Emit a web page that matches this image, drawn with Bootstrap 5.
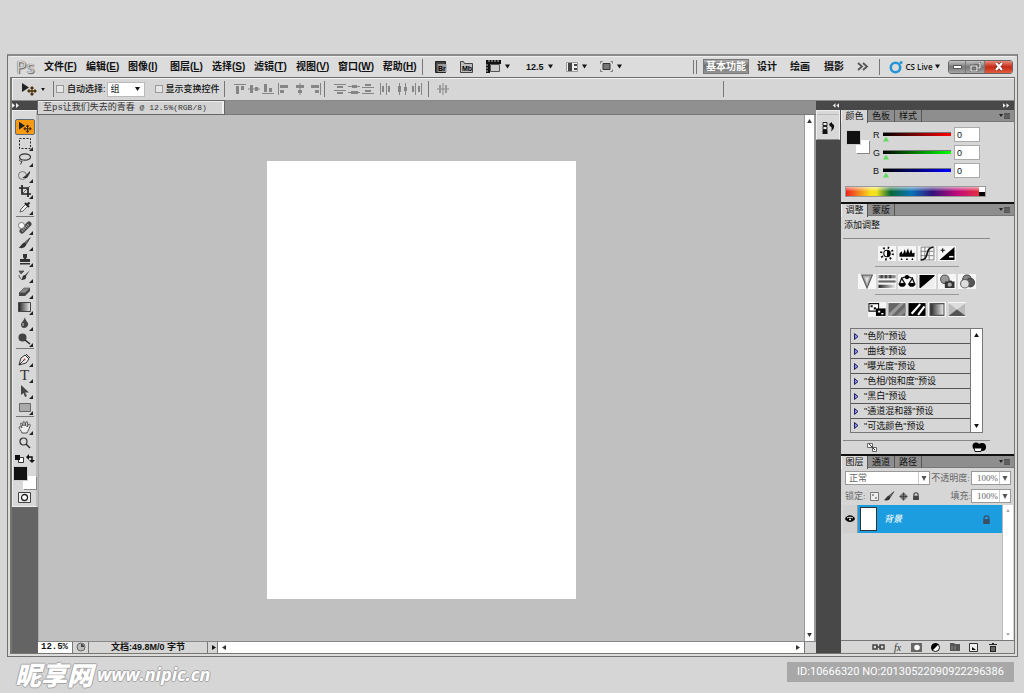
<!DOCTYPE html>
<html lang="zh-CN">
<head>
<meta charset="utf-8">
<meta name="viewport" content="width=device-width, initial-scale=1">
<title>Photoshop</title>
<link href="https://cdn.jsdelivr.net/npm/bootstrap@5.3.0/dist/css/bootstrap.min.css" rel="stylesheet">
<style>
  body{background:#d6d6d6;color:#111;font:10px/14px "Liberation Sans","Noto Sans CJK SC",sans-serif;min-height:100vh}
  button,input,select{font:inherit;color:inherit;padding:0;margin:0;border:0;background:none;border-radius:0}
  button{display:inline-flex;align-items:center;justify-content:center;line-height:1}
  a{color:inherit;text-decoration:none}
  svg{display:block;flex:none}
  .stage{padding:54px 6px 0 7px}
  .frame{border:1px solid #707070;border-top:2px solid #8a8a8a;background:#dcdcdc;padding:0 2px 2px 2px}
  .inner-frame{border:solid #77776f;border-width:0 1px 1px 2px;background:#d6d6d6}
  /* menu bar */
  .menubar{height:21px;padding-left:2px;box-shadow:inset 0 1px #eee}
  .ps-mark{font:17px/20px "Open Sans",sans-serif;color:#d2d2d2;text-shadow:0 0 1px #444,1px 1px 1px #666;width:28px}
  .menus{display:grid;grid-auto-flow:column;grid-auto-columns:42px;font-weight:700;white-space:nowrap}
  .menus u{text-underline-offset:1px}
  .vline{width:1px;height:16px;background:#777;flex:none}
  .launch{margin-left:12px;font-weight:700;font-size:9px}
  .wide{margin-left:13px}
  .spaces{display:grid;grid-template-columns:50px 32px 34px 34px 24px;align-items:center;justify-items:center;font-weight:700}
  .space-on{background:linear-gradient(#b0b0b0,#6d6d6d 45%,#969696);color:#fff;width:46px;height:15px;border:1px solid #777;font-weight:700}
  .spaces button{white-space:nowrap;font-weight:700}
  .grip{width:4px;height:14px;border:solid #777;border-width:0 1px}
  .live{width:51px;margin:0 8px 0 9px;font:600 8px/14px "Open Sans",sans-serif;white-space:nowrap;justify-content:space-between}
  .winbtns{width:65px;height:14px;border:1px solid #666;border-radius:3px;overflow:hidden;margin-right:2px}
  .winbtns button{height:100%;background:linear-gradient(#c4c4c4,#777 50%,#a5a5a5);border-right:1px solid #777}
  .winbtns .quit{background:linear-gradient(#e88a78,#c62b15 50%,#e25b3e);border:0}
  /* options bar */
  .optbar{height:24px;border-top:1px solid #6e6e6e;border-bottom:1px solid #888;box-shadow:inset 1px 1px #f2f2f2;padding-left:9px}
  .optbar label{font-size:9px;white-space:nowrap;font-weight:500}
  .tick{appearance:none;width:8px;height:8px;border:1px solid #999;background:#e6e6e6;flex:none;margin:0 3px 0 2px}
  .pick{appearance:none;background:#fff url("data:image/svg+xml,%3Csvg xmlns='http://www.w3.org/2000/svg' width='5' height='4'%3E%3Cpath d='M0 0h5L2.500 4z' fill='%23111'/%3E%3C/svg%3E") no-repeat right 4px center;border:1px solid #bbb;width:38px;height:15px;padding-left:3px;line-height:13px;font-size:9px;margin:0 8px 0 1px}
  .aligns{display:grid;color:#858585;align-items:center;justify-items:center}
  .al-a{grid-template-columns:14px 14px 14px 16px 18px 15px;width:91px}
  .al-b{grid-template-columns:14px 14px 14px 20px 15px 14px;width:91px}
  /* toolbox */
  .tools{width:26px;background:#646464;flex:none}
  .darkcap{height:9px;background:#484848;color:#eee;flex:none}
  .toolbox{background:#d8d8d8;border:1px solid #eee;border-right:2px solid #bbb;height:397px;padding-top:8px;color:#333}
  .toolbox button{width:20px;height:16px;position:relative}
  .toolbox .more::after{content:"";position:absolute;right:2px;bottom:0;border:solid transparent;border-width:2px;border-right-color:#222;border-bottom-color:#222}
  .toolbox .current{background:#f79b12;border:1px solid #5d6b77;border-radius:2px}
  .rule{width:18px;height:1px;background:#777;margin:1px 0 2px}
  .fgbg{width:22px;height:22px;position:relative}
  .fgbg i{position:absolute;width:13px;height:13px;background:#fff;box-shadow:1px 1px #888;right:0;bottom:0}
  .fgbg i:first-child{background:#111;left:0;top:0;right:auto;bottom:auto;z-index:1;box-shadow:0 0 0 1px #ccc}
  /* document */
  .tabstrip{height:14px;background:#909090;border-bottom:1px solid #777}
  .doc-tab{background:#d3d3d3;border:solid #eee;border-width:1px 2px 0 0;outline:1px solid #666;padding:0 5px;font:9px/12px "Liberation Mono","Noto Sans CJK SC",monospace;color:#333;height:13px;width:186px;white-space:nowrap;overflow:hidden}
  .doc-info{font-size:8px}
  .pasteboard{background:#c0c0c0;border-left:1px solid #a8a8a8;padding:3px 0 0}
  .page{background:#fff;width:309px;height:438px}
  .vscroll{width:12px;background:#fff;border:solid #999;border-width:0 2px 0 1px;flex:none}
  .vscroll,.hscroll{color:#333}
  .status{height:12px;border-top:1px solid #888;font:9px/11px "Liberation Sans","Noto Sans CJK SC",sans-serif;font-weight:700}
  .zoomin{width:34px;background:#fff;padding-left:3px;font-family:"Liberation Mono",monospace;font-size:9px;font-weight:700;height:11px}
  .cell{border-left:1px solid #777;height:11px}
  .hscroll{background:#fff;height:11px}
  /* dock */
  .dock{width:198px;flex:none}
  .strip{width:25px;background:#484848;flex:none}
  .strip button{width:24px;height:30px;background:#d8d8d8;border:1px solid #eee;border-bottom-color:#888;padding-top:5px;box-shadow:inset 0 3px #d8d8d8,inset 0 4px #bbb}
  .tabrow{height:12px;background:#8e8e8e;font-size:9px;line-height:12px;border-bottom:1px solid #777}
  .tabrow button{width:27px;height:12px;border-right:1px solid #555;white-space:nowrap}
  .tabrow .on{background:#d6d6d6;height:13px;border-left:1px solid #eee}
  .panel-bg{background:#d6d6d6}
  .edge{border-bottom:2px solid #111}
  .color-body{padding:5px 0 0 6px}
  .rgb{display:grid;grid-template-columns:10px 68px 25px;column-gap:0;row-gap:3px;font-size:9px;align-items:center}
  .rgb input[type=text]{width:26px;height:15px;background:#fff;border:1px solid #aaa;padding-left:2px;margin-left:3px;font-size:9px;line-height:12px}
  .rgb input[type=range]{appearance:none;width:68px;height:10px;margin-top:4px;background:linear-gradient(#777,#777) 0 0/100% 1px no-repeat,linear-gradient(90deg,#000,var(--ink)) 0 0/100% 4px no-repeat}
  .rgb input[type=range]::-webkit-slider-thumb{appearance:none;width:6px;height:5px;margin-top:5px;background:#5fdc5f;clip-path:polygon(50% 0,100% 100%,0 100%)}
  .spectrum{width:141px;height:11px;border:1px solid #999;background:linear-gradient(#fff9,#fff0 50%),linear-gradient(90deg,#e22,#f7e11b 18%,#f0e020 22%,#0a6a35 32%,#0a72b8 47%,#33127c 62%,#c00878 80%,#e8343c 97%)}
  .spectrum i{width:6px;background:linear-gradient(#fff 50%,#000 50%)}
  .adj{width:147px;margin-left:2px}
  .adj-title{padding:2px 0 6px 1px;font-size:9px}
  .hr-full{height:1px;background:#888;width:147px}
  .hr-part{height:1px;background:#999;width:84px;margin:5px auto 6px}
  .ic{width:20px;height:16px}
  .ic svg{background:#f6f6f6;width:18px;height:15px}
  .presets{width:133px;border:1px solid #777;margin:11px 0 7px 9px;height:105px}
  .presets li{height:15px;line-height:14px;border-bottom:1px solid #555;font-size:9px}
  .presets li:last-child{border:0;height:13px}
  .presets ul{border-right:1px solid #777}
  .serif{font-family:"Liberation Serif","Noto Sans CJK SC",serif;font-size:9px;color:#666;white-space:nowrap}
  .blend{appearance:none;background:#fff url("data:image/svg+xml,%3Csvg xmlns='http://www.w3.org/2000/svg' width='11' height='12'%3E%3Cpath d='M0 0v12' stroke='%23999'/%3E%3Cpath d='M3.500 4h5L6 9z' fill='%23555'/%3E%3C/svg%3E") no-repeat right center;border:1px solid #999;height:14px;padding-left:3px;line-height:12px}
  .pct{width:40px;padding-left:5px}
  .mode{width:85px}
  .layer-row{height:28px;background:#1c9de0;color:#fff}
  .eye{width:15px;background:#d0d0d0;border-right:1px solid #999}
  .thumb{width:17px;height:24px;background:#fff;border:1px solid #333;margin-left:2px}
  .layer-name{margin-left:7px;font-size:9px}
  .lscroll{width:11px;background:#fff;border-left:1px solid #bbb;color:#aaa}
  .foot-icons{height:13px;border-top:1px solid #777;display:grid;grid-template-columns:repeat(7,19px);justify-content:end;justify-items:center;align-items:center;padding-right:12px;color:#333}
  .foot-icons button{width:14px;height:11px}
  /* page footer */
  .site-foot{height:36px;padding:0 10px 2px 15px}
  .site-name,.site-url{color:#fff;text-shadow:1px 0 #a5a5a5,-1px 0 #a5a5a5,0 1px #a5a5a5,0 -1px #a5a5a5}
  .site-name{font:italic 900 26px/30px "Noto Sans CJK SC",sans-serif}
  .site-url{font:italic 700 18px/30px "Open Sans",sans-serif}
  .stamp{background:#a8a8a8;color:#fff;font:11px/20px Roboto,sans-serif;height:20px;width:227px;text-align:center;white-space:nowrap}
</style>
</head>
<body class="d-flex flex-column">
<svg width="0" height="0" class="position-absolute" aria-hidden="true">
  <symbol id="dn" viewBox="0 0 6 5"><path d="M0 0h6L3 5z" fill="currentColor"/></symbol>
  <symbol id="up" viewBox="0 0 6 5"><path d="M0 5h6L3 0z" fill="currentColor"/></symbol>
  <symbol id="rt" viewBox="0 0 5 6"><path d="M0 0v6l5-3z" fill="currentColor"/></symbol>
  <symbol id="lt" viewBox="0 0 5 6"><path d="M5 0v6L0 3z" fill="currentColor"/></symbol>
  <symbol id="dbl" viewBox="0 0 8 5"><path d="M0 0v5l3-2.500zM4 0v5l3-2.500z" fill="currentColor"/></symbol>
  <symbol id="fly" viewBox="0 0 11 6"><path d="M0 1h4L2 4z" fill="#222"/><path d="M5 0h6v6H5z" fill="#555"/><path d="M5 2h6M5 4h6" stroke="#777" stroke-width=".6"/></symbol>
  <symbol id="brush" viewBox="0 0 16 16"><path d="M15 1L8 7l2 2z" fill="#777" stroke="#333"/><path d="M8 7c-3 0-3 3-7 6 4 2 9 0 9-4z" fill="#333"/></symbol>
  <symbol id="lock" viewBox="0 0 10 11"><path d="M2 5V4a3 3 0 016 0v1" fill="none" stroke="currentColor" stroke-width="1.500"/><path d="M1 5h8v6H1z" fill="currentColor"/></symbol>
  <symbol id="move" viewBox="0 0 16 14"><path d="M1 1v9l7-4.500z" fill="#222"/><path d="M11 5v8M7 9h8M9.500 6.500L11 5l1.500 1.500M9.500 11.500L11 13l1.500-1.500M8.500 7.500L7 9l1.500 1.500M13.500 7.500L15 9l-1.500 1.500" stroke="#4a2d08" stroke-width="1.300" fill="none"/></symbol>
  <symbol id="alT" viewBox="0 0 12 12"><path d="M0 1.500h12" stroke="currentColor"/><path d="M2 3h3v8H2zM7 3h3v4H7z" fill="currentColor"/></symbol>
  <symbol id="alM" viewBox="0 0 12 12"><path d="M0 6h12" stroke="currentColor"/><path d="M2 2h3v8H2zM7 4h3v4H7z" fill="currentColor"/></symbol>
  <symbol id="dis" viewBox="0 0 12 12"><path d="M0 1.500h12M0 7.500h12" stroke="currentColor"/><path d="M3 3h6v2H3zM3 9h6v2H3z" fill="currentColor"/></symbol>
</svg>

<div class="stage flex-grow-1 d-flex flex-column">
 <div class="frame flex-grow-1 d-flex flex-column">
  <header class="menubar d-flex align-items-center">
    <span class="ps-mark ms-1">Ps</span>
    <nav class="menus">
      <a href="#">文件(<u>F</u>)</a><a href="#">编辑(<u>E</u>)</a><a href="#">图像(<u>I</u>)</a><a href="#">图层(<u>L</u>)</a><a href="#">选择(<u>S</u>)</a><a href="#">滤镜(<u>T</u>)</a><a href="#">视图(<u>V</u>)</a><a href="#">窗口(<u>W</u>)</a><a href="#">&nbsp;帮助(<u>H</u>)</a>
    </nav>
    <span class="vline"></span>
    <div class="launch d-flex align-items-center">
      <button aria-label="Bridge"><svg width="12" height="12" viewBox="0 0 12 12"><path d="M.500.500h10v11H.500z" fill="#444" stroke="#222"/><path d="M2.500 3h9v8h-9z" fill="#999"/><text x="3" y="9.500" font-size="7" font-weight="700">Br</text></svg></button>
      <button class="wide" aria-label="Mini Bridge"><svg width="13" height="12" viewBox="0 0 13 12"><path d="M.500 11.500V.500h3l1 2h8v9z" fill="#bbb" stroke="#444"/><text x="2" y="9.500" font-size="7" font-weight="700">Mb</text></svg></button>
      <button class="wide" aria-label="标尺"><svg width="15" height="13" viewBox="0 0 15 13"><path d="M0 0h15v4H4v9H0z" fill="#111"/><path d="M4.500 4.500h9v7h-9z" fill="#ccc" stroke="#555"/><path d="M3 0v2M6 0v2M9 0v2M12 0v2M0 5h2M0 8h2M0 11h2" stroke="#bbb"/></svg></button>
      <svg width="5" height="5" class="ms-1"><use href="#dn"/></svg><span class="ms-3">12.5</span>
      <svg width="5" height="5" class="ms-1"><use href="#dn"/></svg>
      <button class="wide" aria-label="排列文档"><svg width="12" height="10" viewBox="0 0 12 10"><path d="M.500.500h11v9H.500z" fill="#eee" stroke="#999"/><path d="M2 1h4v8H2zM8 2h3v2H8zM8 6h3v2H8z" fill="#444"/></svg></button>
      <svg width="5" height="5" class="ms-1"><use href="#dn"/></svg>
      <button class="wide" aria-label="屏幕模式"><svg width="13" height="11" viewBox="0 0 13 11"><path d="M3 2.500h7v6H3z" fill="#777" stroke="#333"/><path d="M.500 2.500v-2h2M10.500.500h2v2M.500 8.500v2h2M10.500 10.500h2v-2" fill="none" stroke="#777"/></svg></button>
      <svg width="5" height="5" class="ms-1"><use href="#dn"/></svg>
    </div>
    <div class="ms-auto d-flex align-items-center">
      <span class="grip"></span>
      <div class="spaces ms-1"><button class="space-on">基本功能</button><button>设计</button><button>绘画</button><button>摄影</button>
        <button aria-label="更多"><svg width="12" height="9" viewBox="0 0 12 9"><path d="M1 1l4 3.500L1 8M6 1l4 3.500L6 8" fill="none" stroke="#555" stroke-width="1.800"/></svg></button></div>
      <span class="vline ms-1"></span>
      <button class="live"><svg width="14" height="14" viewBox="0 0 14 14"><circle cx="6.500" cy="7.500" r="4.700" fill="none" stroke="#2595d6" stroke-width="2.600"/><circle cx="12" cy="2.500" r="1.500" fill="#2595d6"/></svg>CS Live<svg width="5" height="5"><use href="#dn"/></svg></button>
      <div class="winbtns d-flex">
        <button style="flex:17" aria-label="最小化"><svg width="9" height="4"><path d="M.500.500h8v3h-8z" fill="#fff" stroke="#555"/></svg></button>
        <button style="flex:19" aria-label="还原"><svg width="11" height="10" viewBox="0 0 11 10"><path d="M4 1h6v5H8M1 4h6v5H1z" fill="none" stroke="#444" stroke-width="2.400"/><path d="M4 1h6v5H8M1 4h6v5H1z" fill="none" stroke="#fff" stroke-width="1.200"/></svg></button>
        <button style="flex:28" class="quit" aria-label="关闭"><svg width="10" height="9" viewBox="0 0 10 9"><path d="M2 1l6 7M8 1L2 8" stroke="#622" stroke-width="3.400"/><path d="M2 1l6 7M8 1L2 8" stroke="#fff" stroke-width="2.200"/></svg></button>
      </div>
    </div>
  </header>

  <div class="inner-frame flex-grow-1 d-flex flex-column">
   <div class="optbar d-flex align-items-center">
    <svg width="16" height="14" aria-hidden="true"><use href="#move"/></svg>
    <svg width="4" height="3" class="ms-1"><use href="#dn"/></svg>
    <span class="vline ms-2"></span>
    <input type="checkbox" class="tick" id="auto"><label for="auto">自动选择:</label>
    <select class="pick" aria-label="自动选择"><option>组</option></select>
    <input type="checkbox" class="tick" id="ctl"><label for="ctl">显示变换控件</label>
    <span class="vline ms-1 me-2"></span>
    <div class="aligns al-a">
      <svg width="12" height="12"><use href="#alT"/></svg><svg width="12" height="12"><use href="#alM"/></svg><svg width="12" height="12"><use href="#alT" transform="matrix(1 0 0 -1 0 12)"/></svg>
      <svg width="12" height="12"><use href="#alT" transform="matrix(0 1 1 0 0 0)"/></svg><svg width="12" height="12"><use href="#alM" transform="matrix(0 1 1 0 0 0)"/></svg><svg width="12" height="12"><use href="#alT" transform="matrix(0 1 -1 0 12 0)"/></svg>
    </div>
    <span class="vline me-2"></span>
    <div class="aligns al-b">
      <svg width="12" height="12"><use href="#dis"/></svg><svg width="12" height="12"><path d="M0 3.500h12M0 9.500h12" stroke="currentColor"/><path d="M4 2h5v3H4zM3 8h7v3H3z" fill="currentColor"/></svg><svg width="12" height="12"><use href="#dis" transform="matrix(1 0 0 -1 0 12)"/></svg>
      <svg width="12" height="12"><use href="#dis" transform="matrix(0 1 1 0 0 0)"/></svg><svg width="12" height="12"><path d="M3.500 0v12M9.500 0v12" stroke="currentColor"/><path d="M2 3h3v6H2zM8 4h3v4H8z" fill="currentColor"/></svg><svg width="12" height="12"><use href="#dis" transform="matrix(0 1 -1 0 12 0)"/></svg>
    </div>
    <span class="vline ms-1 me-2"></span>
    <svg width="12" height="12" viewBox="0 0 12 12"><path d="M6 0v12M0 6h12" stroke="#888"/><path d="M2 2h2v8H2zM8 2h2v8H8z" fill="#999"/></svg>
    <span class="vline ms-auto" style="margin-right:290px"></span>
   </div>

   <div class="flex-grow-1 d-flex">
    <aside class="tools">
      <div class="darkcap d-flex align-items-center"><svg width="8" height="5"><use href="#dbl"/></svg></div>
      <div class="toolbox d-flex flex-column align-items-center">
        <button class="current" aria-label="移动"><svg width="14" height="12"><use href="#move"/></svg></button>
        <button class="more" aria-label="选框"><svg width="12" height="11"><path d="M.500.500h11v10H.500z" fill="none" stroke="#222" stroke-dasharray="2 1.500"/></svg></button>
        <button class="more" aria-label="套索"><svg width="13" height="12" viewBox="0 0 13 12"><ellipse cx="7" cy="4" rx="5.500" ry="3.200" fill="none" stroke="#333" stroke-width="1.200"/><path d="M3 6c-3 1-1 3 1 2 0 1-1 3-2 3.500" fill="none" stroke="#333"/></svg></button>
        <button class="more" aria-label="快速选择"><svg width="13" height="12" viewBox="0 0 13 12"><circle cx="4.500" cy="6.500" r="4" fill="none" stroke="#777"/><path d="M12 2L7 7l-3 2 5 0 3-5z" fill="#333"/></svg></button>
        <button class="more" aria-label="裁剪"><svg width="12" height="12" viewBox="0 0 12 12"><path d="M3 0v9h9M0 3h9v9" fill="none" stroke="#222" stroke-width="1.700"/><path d="M11 1L4 8" stroke="#333" stroke-width=".7"/></svg></button>
        <button class="more" aria-label="吸管"><svg width="12" height="12" viewBox="0 0 12 12"><path d="M1 11l1-3 5-5 2 2-5 5z" fill="#eee" stroke="#444" stroke-width=".8"/><path d="M6 2l4 4M8 4l2.500-2.500" stroke="#222" stroke-width="2"/></svg></button>
        <div class="rule"></div>
        <button class="more" aria-label="修复画笔"><svg width="14" height="13" viewBox="0 0 14 13"><path d="M4 10l7-7" stroke="#444" stroke-width="5" stroke-linecap="round"/><path d="M4 10l7-7" stroke="#aaa" stroke-width="2.500" stroke-dasharray="1 1"/><circle cx="3.500" cy="4.500" r="3" fill="#fff" stroke="#777"/></svg></button>
        <button class="more" aria-label="画笔"><svg width="13" height="13"><use href="#brush"/></svg></button>
        <button class="more" aria-label="图章"><svg width="12" height="12" viewBox="0 0 12 12"><path d="M4 1h4v3L7 6h4v3H1V6h4L4 4zM1 10h10v1.500H1z" fill="#333"/></svg></button>
        <button class="more" aria-label="历史画笔"><svg width="13" height="12" viewBox="0 0 13 12"><path d="M12 1L7 6C4 6 5 9 3 11c3 0 6-1 5-4z" fill="#333"/><path d="M1 2h5L3 5zM1 6c0 2 1 3 2 4" fill="#555" stroke="#444" stroke-width=".7"/></svg></button>
        <button class="more" aria-label="橡皮擦"><svg width="13" height="11" viewBox="0 0 13 11"><path d="M1 7l5-5h6L7 7z" fill="#888" stroke="#444" stroke-width=".6"/><path d="M1 7h6v3H1zM7 7l5-5v3l-5 5z" fill="#444"/></svg></button>
        <button class="more" aria-label="渐变"><svg width="13" height="10"><defs><linearGradient id="gr"><stop stop-color="#222"/><stop offset="1" stop-color="#eee"/></linearGradient></defs><path d="M.500.500h12v9H.500z" fill="url(#gr)" stroke="#444"/></svg></button>
        <button class="more" aria-label="模糊"><svg width="9" height="12" viewBox="0 0 9 12"><path d="M5 0c0 4 4 5 3 8-1 4-7 4-7 0 0-3 3-4 4-8z" fill="#444"/><path d="M3 6v3" stroke="#ccc"/></svg></button>
        <button class="more" aria-label="减淡"><svg width="13" height="12" viewBox="0 0 13 12"><circle cx="4.500" cy="4.500" r="4" fill="#444"/><path d="M7 7l5 4" stroke="#222" stroke-width="1.500"/></svg></button>
        <div class="rule"></div>
        <button class="more" aria-label="钢笔"><svg width="13" height="13" viewBox="0 0 13 13"><path d="M1 12l2-7 4-3 4 4-3 4zM8 1l4 4M1 12l5-5" fill="#eee" stroke="#333"/><circle cx="6.500" cy="6.500" r="1" fill="#a44"/></svg></button>
        <button class="more" aria-label="文字" style="font:15px/16px 'Liberation Serif',serif">T</button>
        <button class="more" aria-label="路径选择"><svg width="9" height="12" viewBox="0 0 9 12"><path d="M1 0v10l2.500-2 1.500 4 2-1-2-3.500h4z" fill="#444"/></svg></button>
        <button class="more" aria-label="矩形"><svg width="12" height="9"><path d="M.500.500h11v8H.500z" fill="#aaa" stroke="#666"/></svg></button>
        <div class="rule"></div>
        <button class="more" aria-label="抓手"><svg width="14" height="13" viewBox="0 0 14 13"><path d="M4 12C3 9 1 8 1 6c1-1 2 0 3 1L2.500 2.500c1-1 1.500 0 2 1L5 5V1c1-1 2 0 2 1v3l1-4c1-1 2 0 1.500 1L9 6l2-3c1 0 1.500 1 1 2-1 3-2 5-3 7z" fill="#eee" stroke="#444" stroke-width=".9"/></svg></button>
        <button aria-label="缩放"><svg width="12" height="12" viewBox="0 0 12 12"><circle cx="4.500" cy="4.500" r="3.500" fill="none" stroke="#333" stroke-width="1.200"/><path d="M7 7l4 4" stroke="#333" stroke-width="1.600"/></svg></button>
        <button aria-label="默认颜色"><svg width="20" height="10" viewBox="0 0 20 10"><path d="M3.500 3.500h5v5h-5z" fill="#fff" stroke="#333"/><path d="M0 1h5v5H0z" fill="#111"/><path d="M13 3h4v4" fill="none" stroke="#111" stroke-width="1.500"/><path d="M11 3l3-3v6zM14 6h6l-3 3z" fill="#111"/></svg></button>
        <div class="fgbg"><i></i><i></i></div>
        <button aria-label="快速蒙版"><svg width="13" height="11"><path d="M.500.500h12v10H.500z" fill="#eee" stroke="#444"/><circle cx="6.500" cy="5.500" r="3" fill="#fff" stroke="#222" stroke-width="1.300"/></svg></button>
      </div>
    </aside>

    <main class="flex-grow-1 d-flex flex-column">
      <div class="tabstrip"><div class="doc-tab">至ps让我们失去的青春<span class="doc-info"> @ 12.5%(RGB/8)</span></div></div>
      <div class="flex-grow-1 d-flex">
        <div class="pasteboard flex-grow-1 d-flex align-items-center justify-content-center"><div class="page"></div></div>
        <div class="vscroll d-flex flex-column justify-content-between align-items-center py-1"><svg width="5" height="4"><use href="#up"/></svg><svg width="5" height="4"><use href="#dn"/></svg></div>
      </div>
      <div class="status d-flex">
        <input class="zoomin" value="12.5%" aria-label="缩放比例">
        <div class="cell d-flex justify-content-center" style="width:16px"><svg width="10" height="10"><circle cx="5" cy="5" r="4" fill="#bbb" stroke="#666"/><path d="M5 5V2a3 3 0 013 3z" fill="#444"/></svg></div>
        <div class="cell text-center" style="width:119px">文档:49.8M/0 字节</div>
        <div class="cell d-flex align-items-center ps-1" style="width:10px"><svg width="4" height="7"><use href="#rt"/></svg></div>
        <div class="hscroll cell flex-grow-1 d-flex align-items-center justify-content-between px-1"><svg width="4" height="5"><use href="#lt"/></svg><svg width="4" height="5"><use href="#rt"/></svg></div>
        <div class="cell" style="width:12px"></div>
      </div>
    </main>

    <aside class="dock d-flex flex-column">
      <div class="darkcap d-flex align-items-center justify-content-between pe-1" style="padding-left:16px"><svg width="7" height="5"><use href="#dbl" transform="matrix(-1 0 0 1 7 0)"/></svg><svg width="7" height="5"><use href="#dbl"/></svg></div>
      <div class="d-flex flex-grow-1">
        <div class="strip"><button aria-label="历史记录"><svg width="13" height="14" viewBox="0 0 13 14"><path d="M1 1.500h4v3H1zM1 5.500h4v3H1z" fill="#eee" stroke="#222"/><path d="M.500 9h5v4h-5z" fill="#111"/><path d="M7 3l3-2v1.500c3 1 3 5-1 8 1-3 1-5-1-5z" fill="#111"/></svg></button></div>
        <div class="flex-grow-1 d-flex flex-column panel-bg">
          <section class="edge" style="height:94px">
            <div class="tabrow d-flex"><button class="on">颜色</button><button>色板</button><button>样式</button><svg width="11" height="6" class="ms-auto me-1 my-auto"><use href="#fly"/></svg></div>
            <div class="color-body d-flex">
              <div class="fgbg mt-1 me-1"><i></i><i></i></div>
              <div class="rgb">
                <label for="r">R</label><input type="range" value="0" max="255" style="--ink:#f00" aria-label="R"><input type="text" id="r" value="0">
                <label for="g">G</label><input type="range" value="0" max="255" style="--ink:#0f0" aria-label="G"><input type="text" id="g" value="0">
                <label for="b">B</label><input type="range" value="0" max="255" style="--ink:#00f" aria-label="B"><input type="text" id="b" value="0">
              </div>
            </div>
            <div class="spectrum d-flex justify-content-end ms-1 mt-2"><i></i></div>
          </section>
          <section class="edge" style="height:252px">
            <div class="tabrow d-flex"><button class="on">调整</button><button>蒙版</button><svg width="11" height="6" class="ms-auto me-1 my-auto"><use href="#fly"/></svg></div>
            <div class="adj">
              <div class="adj-title">添加调整</div>
              <div class="hr-full"></div>
              <div class="d-flex justify-content-center" style="padding-top:6px">
                <button class="ic" aria-label="亮度/对比度"><svg viewBox="0 0 16 14"><circle cx="8" cy="7" r="3" fill="#fff" stroke="#111"/><path d="M8 4a3 3 0 010 6z"/><circle cx="8" cy="7" r="5.500" fill="none" stroke="#111" stroke-width="2" stroke-dasharray="1.500 2.820"/></svg></button>
                <button class="ic" aria-label="色阶"><svg viewBox="0 0 16 14"><path d="M1 10V7l2-2 1 3 2-5 1 4 2-5 1 5 2-4 1 4 2-1v4zM2 13l1-2 1 2zM7 13l1-2 1 2zM12 13l1-2 1 2z"/></svg></button>
                <button class="ic" aria-label="曲线"><svg viewBox="0 0 16 14"><path d="M2.500 1v12h12V1zM6 1v12M10 1v12M2 5h12M2 9h12" fill="none" stroke="#777" stroke-width=".8"/><path d="M2 13c9 0 3-11 12-12" fill="none" stroke="#111" stroke-width="1.500"/></svg></button>
                <button class="ic" aria-label="曝光度"><svg viewBox="0 0 16 14"><path d="M15 1v12H1z"/><path d="M2 4h4M4 2v4" stroke="#111"/><path d="M10 10h4" stroke="#fff" stroke-width="1.500"/></svg></button>
              </div>
              <div class="hr-part"></div>
              <div class="d-flex justify-content-center">
                <button class="ic" aria-label="自然饱和度"><svg viewBox="0 0 16 14"><path d="M3 1h10L8 13z" fill="#aaa" stroke="#555"/><path d="M6 3h4L8 9z" fill="#ddd"/></svg></button>
                <button class="ic" aria-label="色相/饱和度"><svg viewBox="0 0 16 14"><path d="M0 1h16v3H0z" fill="#888"/><path d="M3 1v3M7 1v3M11 1v3" stroke="#444" stroke-width="2"/><path d="M0 6h16v2H0z" fill="#666"/><path d="M0 10h16v3H0z" fill="url(#gr)"/></svg></button>
                <button class="ic" aria-label="色彩平衡"><svg viewBox="0 0 16 14"><path d="M8 1v3M3 4c4-2 6-2 10 0M3 4L1 9h5zM13 4l-3 5h5z" fill="none" stroke="#111" stroke-width="1.200"/><path d="M0 9h7c-1 4-6 4-7 0zM9 9h7c-1 4-6 4-7 0z"/><circle cx="8" cy="3" r="2"/></svg></button>
                <button class="ic" aria-label="黑白"><svg viewBox="0 0 16 14"><path d="M1 1h14v1L2 13H1z"/><path d="M15 2v11H3z" fill="#eee"/></svg></button>
                <button class="ic" aria-label="照片滤镜"><svg viewBox="0 0 16 14"><circle cx="6" cy="5" r="4" fill="#999" stroke="#555"/><path d="M6 7h3l1-1h2l1 1h2v6H6z" fill="#333"/><circle cx="10.500" cy="10" r="2" fill="#aaa"/></svg></button>
                <button class="ic" aria-label="通道混和器"><svg viewBox="0 0 16 14"><circle cx="8" cy="5" r="4" fill="#888" stroke="#444"/><circle cx="11" cy="8" r="4" fill="#555" stroke="#444"/><circle cx="6" cy="9" r="4" fill="#ddd" stroke="#666"/></svg></button>
              </div>
              <div class="hr-part"></div>
              <div class="d-flex justify-content-center">
                <button class="ic" aria-label="反相"><svg viewBox="0 0 16 14"><path d="M.500 1.500h9v7h-9z" fill="#fff" stroke="#111"/><path d="M7 6h9v7H7z"/><path d="M2 4h2M5 6h2" stroke="#111" stroke-width="2"/><path d="M9 9h2M12 11h2" stroke="#fff" stroke-width="1.500"/></svg></button>
                <button class="ic" aria-label="色调分离"><svg viewBox="0 0 16 14"><path d="M0 1h16v12H0z" fill="#666"/><path d="M0 11L11 1h4L3 13H0z" fill="#999"/><path d="M7 13l9-9v5l-4 4z" fill="#888"/></svg></button>
                <button class="ic" aria-label="阈值"><svg viewBox="0 0 16 14"><path d="M0 1h16v12H0z"/><path d="M3 11l8-9M9 12l6-8" stroke="#fff" stroke-width="2"/></svg></button>
                <button class="ic" aria-label="渐变映射"><svg viewBox="0 0 16 14"><path d="M1.500 1.500h13v11h-13z" fill="url(#gr)" stroke="#555"/></svg></button>
                <button class="ic" aria-label="可选颜色"><svg viewBox="0 0 16 14"><path d="M0 1h16v12H0z" fill="#bbb"/><path d="M0 1h16L8 7z" fill="#ddd"/><path d="M0 13l8-6 8 6z" fill="#555"/></svg></button>
              </div>
            </div>
            <div class="presets d-flex">
              <ul class="list-unstyled mb-0 flex-grow-1" id="presetList"></ul>
              <div class="d-flex flex-column justify-content-between align-items-center bg-white py-1" style="width:11px"><svg width="5" height="4"><use href="#up"/></svg><svg width="5" height="4"><use href="#dn"/></svg></div>
            </div>
            <div class="adj"><div class="hr-full"></div>
              <div class="d-flex justify-content-between" style="padding:1px 3px 0 23px"><svg width="12" height="10"><path d="M1.500 1.500h5v4h-5zM6.500 5.500h4v4h-4z" fill="#fff" stroke="#666"/><path d="M3 2l6 6" stroke="#333"/></svg><svg width="15" height="10"><circle cx="4" cy="4" r="3.500"/><circle cx="10" cy="5" r="4"/><path d="M2 6h8l-1 3.500H3z" fill="#fff" stroke="#111"/></svg></div></div>
          </section>
          <section class="flex-grow-1 d-flex flex-column">
            <div class="tabrow d-flex"><button class="on">图层</button><button>通道</button><button>路径</button><svg width="11" height="6" class="ms-auto me-1 my-auto"><use href="#fly"/></svg></div>
            <div class="d-flex align-items-center justify-content-between serif ps-1" style="padding-right:3px;height:16px;margin-top:2px"><select class="blend mode" aria-label="混合模式"><option>正常</option></select><label for="op">不透明度:</label><select id="op" class="blend pct"><option>100%</option></select></div>
            <div class="d-flex align-items-center serif ps-1" style="padding-right:3px;height:16px;margin-top:2px"><span class="me-1">锁定:</span>
              <svg width="9" height="9"><path d="M.500.500h8v8h-8z" fill="#eee" stroke="#777"/><path d="M2 2h2v2H2zM5 5h2v2H5z" fill="#999"/></svg>
              <svg width="12" height="11" class="ms-1"><use href="#brush"/></svg>
              <svg width="9" height="9" class="ms-1"><path d="M4.500 0L9 4.500 4.500 9 0 4.500z" fill="#777"/><path d="M4.500 1v7M1 4.500h7" stroke="#444"/></svg>
              <svg width="8" height="8" class="ms-1" color="#444"><use href="#lock"/></svg>
              <label for="fill" class="ms-auto">填充:</label><select id="fill" class="blend pct"><option>100%</option></select></div>
            <div class="d-flex flex-grow-1" style="padding:1px 1px 0 2px">
              <div class="flex-grow-1">
                <div class="layer-row d-flex align-items-center">
                  <div class="eye h-100 d-flex align-items-center justify-content-center"><svg width="10" height="8" viewBox="0 0 10 8"><path d="M0 4c2-5 8-5 10 0-2 4-8 4-10 0z"/><path d="M2 3c2-1 4-1 6 0" stroke="#fff" fill="none"/><circle cx="5" cy="4.500" r="1" fill="#fff"/></svg></div>
                  <div class="thumb"></div>
                  <em class="layer-name">背景</em>
                  <svg width="9" height="9" class="ms-auto" style="margin-right:11px" color="#3c4e66"><use href="#lock"/></svg>
                </div>
              </div>
              <div class="lscroll d-flex flex-column justify-content-between align-items-center py-1"><svg width="4" height="3"><use href="#up"/></svg><svg width="4" height="3"><use href="#dn"/></svg></div>
            </div>
            <div class="foot-icons">
              <button aria-label="链接"><svg width="13" height="6"><path d="M1 1h4v4H1zM8 1h4v4H8zM4 3h5" fill="none" stroke="#444" stroke-width="1.500"/></svg></button>
              <button aria-label="样式" style="font:italic 10px 'Liberation Serif',serif">fx</button>
              <button aria-label="蒙版"><svg width="11" height="9"><path d="M0 0h11v9H0z" fill="#666"/><circle cx="6" cy="4.500" r="2.800" fill="#fff"/></svg></button>
              <button aria-label="调整图层"><svg width="9" height="9"><circle cx="4.500" cy="4.500" r="4" fill="#fff" stroke="#111"/><path d="M1.500 7.500a4 4 0 016-6z"/></svg></button>
              <button aria-label="组"><svg width="10" height="8"><path d="M0 0h4l1 1h5v7H0z" fill="#555"/><path d="M2 3v4M5 3v4" stroke="#888"/></svg></button>
              <button aria-label="新建"><svg width="9" height="9"><path d="M.500.500h8v8h-8z" fill="#eee" stroke="#333"/><path d="M3 4v3h4z"/></svg></button>
              <button aria-label="删除"><svg width="8" height="9"><path d="M0 1h8v1H0zM3 0h2v1H3zM1 3h6v6H1z" fill="#222"/><path d="M3 4v4M5 4v4" stroke="#aaa"/></svg></button>
            </div>
          </section>
        </div>
      </div>
    </aside>
   </div>
  </div>
 </div>
</div>

<footer class="site-foot d-flex align-items-center">
  <a href="#" class="site-name">昵享网</a><a href="#" class="site-url ms-1">www.nipic.cn</a>
  <div class="stamp ms-auto mb-1">ID:10666320 NO:20130522090922296386</div>
</footer>
<script>
  document.getElementById('presetList').innerHTML = ['色阶','曲线','曝光度','色相/饱和度','黑白','通道混和器','可选颜色']
    .map(n => `<li class="d-flex align-items-center" style="padding-left:3px"><svg width="5" height="7" style="margin-right:5px"><path d="M.500.500v6L4 3.500z" fill="#88f" stroke="#225"/></svg>"${n}"预设</li>`).join('');
</script>
<script src="https://cdn.jsdelivr.net/npm/bootstrap@5.3.0/dist/js/bootstrap.bundle.min.js"></script>
</body>
</html>
